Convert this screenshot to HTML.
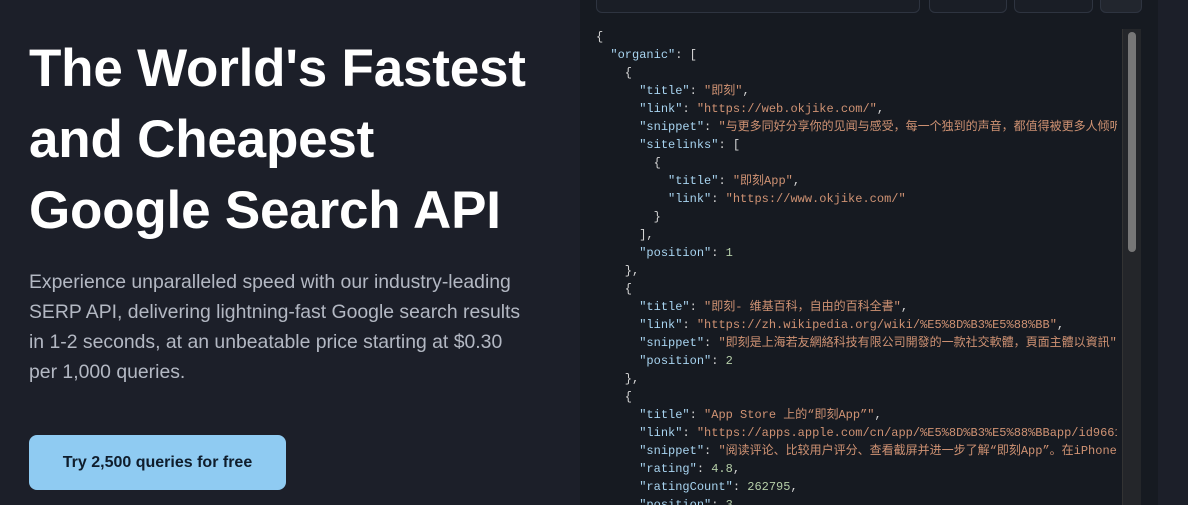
<!DOCTYPE html>
<html><head><meta charset="utf-8"><style>
html,body{margin:0;width:1188px;height:505px;overflow:hidden}
body{background:#1c1f29;font-family:"Liberation Sans",sans-serif;position:relative}
h1{position:absolute;left:29px;top:33px;margin:0;color:#fff;font-size:53px;line-height:71px;font-weight:700;letter-spacing:-0.2px}
p{position:absolute;left:29px;top:267px;margin:0;width:500px;color:#b3b8c3;font-size:19.4px;line-height:30px}
.btn{position:absolute;left:29px;top:435px;width:257px;height:55px;border-radius:8px;background:#8fcbf2;color:#0f1d2c;font-size:16px;font-weight:600;text-align:center;line-height:55px}
.panel{position:absolute;left:580px;top:0;width:578px;height:505px;background:#161a21}
.box{position:absolute;top:-10px;height:21px;border:1px solid #2e3440;border-radius:6px;background:#1a1e26}
pre{position:absolute;left:596px;top:28px;margin:0;width:521px;height:477px;overflow:hidden;font-family:"Liberation Mono","Noto Sans CJK SC",monospace;font-size:12px;line-height:18px;color:#d4d4d4;white-space:pre}
.k{color:#a8d4f0}.s{color:#cf9273}.n{color:#b5cea8}
.track{position:absolute;left:1122px;top:29px;width:18px;height:476px;background:#24262a;border-left:1px solid #333}
.thumb{position:absolute;left:1128px;top:32px;width:8px;height:220px;border-radius:4px;background:#777}
</style></head><body>
<h1>The World's Fastest<br>and Cheapest<br>Google Search API</h1>
<p>Experience unparalleled speed with our industry-leading SERP API, delivering lightning-fast Google search results in 1-2 seconds, at an unbeatable price starting at $0.30 per 1,000 queries.</p>
<div class="btn">Try 2,500 queries for free</div>
<div class="panel"></div>
<div class="box" style="left:596px;width:322px"></div>
<div class="box" style="left:929px;width:76px"></div>
<div class="box" style="left:1014px;width:77px"></div>
<div class="box" style="left:1100px;width:40px;background:#22262e"></div>
<pre>{
  <span class="k">"organic"</span>: [
    {
      <span class="k">"title"</span>: <span class="s">"即刻"</span>,
      <span class="k">"link"</span>: <span class="s">"https://web.okjike.com/"</span>,
      <span class="k">"snippet"</span>: <span class="s">"与更多同好分享你的见闻与感受，每一个独到的声音，都值得被更多人倾听"</span>
      <span class="k">"sitelinks"</span>: [
        {
          <span class="k">"title"</span>: <span class="s">"即刻App"</span>,
          <span class="k">"link"</span>: <span class="s">"https://www.okjike.com/"</span>
        }
      ],
      <span class="k">"position"</span>: <span class="n">1</span>
    },
    {
      <span class="k">"title"</span>: <span class="s">"即刻- 维基百科，自由的百科全書"</span>,
      <span class="k">"link"</span>: <span class="s">"https://zh.wikipedia.org/wiki/%E5%8D%B3%E5%88%BB"</span>,
      <span class="k">"snippet"</span>: <span class="s">"即刻是上海若友網絡科技有限公司開發的一款社交軟體，頁面主體以資訊"</span>
      <span class="k">"position"</span>: <span class="n">2</span>
    },
    {
      <span class="k">"title"</span>: <span class="s">"App Store 上的“即刻App”"</span>,
      <span class="k">"link"</span>: <span class="s">"https://apps.apple.com/cn/app/%E5%8D%B3%E5%88%BBapp/id966129812"</span>
      <span class="k">"snippet"</span>: <span class="s">"阅读评论、比较用户评分、查看截屏并进一步了解“即刻App”。在iPhone"</span>
      <span class="k">"rating"</span>: <span class="n">4.8</span>,
      <span class="k">"ratingCount"</span>: <span class="n">262795</span>,
      <span class="k">"position"</span>: <span class="n">3</span>
</pre>
<div class="track"></div>
<div class="thumb"></div>
</body></html>
